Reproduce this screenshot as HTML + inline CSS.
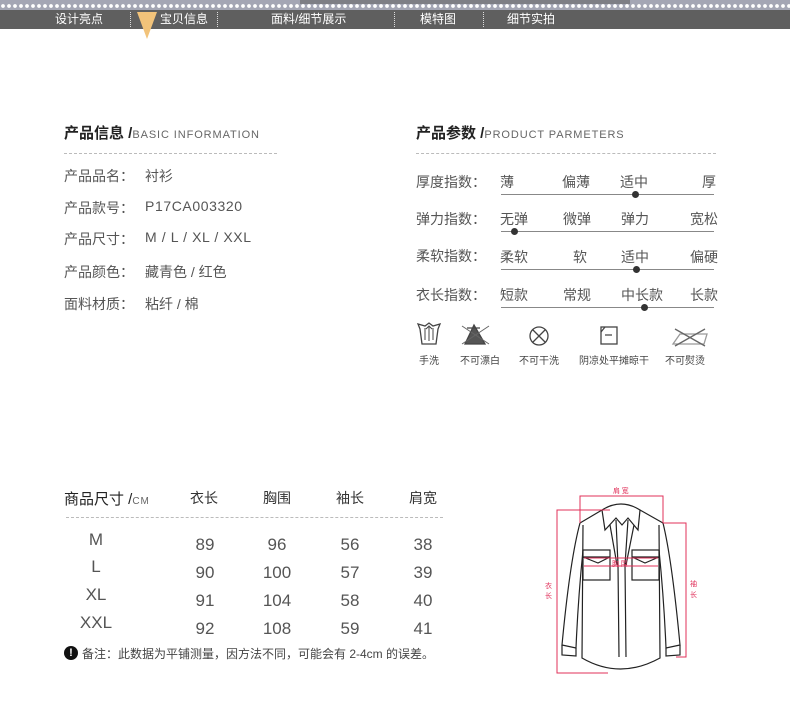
<!DOCTYPE html>
<html><head><meta charset="utf-8"><style>
*{margin:0;padding:0;box-sizing:border-box}
body{width:790px;height:709px;background:#fff;position:relative;overflow:hidden;font-family:"Liberation Sans","Noto Sans CJK SC",sans-serif;color:#555}
.a{position:absolute;white-space:nowrap}
.top{left:0;top:0;width:790px;height:10px;background:#a4a6b4}
.scal{left:0;top:3px;width:790px;height:6px;background:radial-gradient(circle at 3px 3px,#fff 1.6px,transparent 2.2px) 0 0/6px 6px repeat-x}
.nav{left:0;top:10px;width:790px;height:19px;background:#5f5f5f}
.nav span{position:absolute;top:2px;color:#fff;font-size:12px;line-height:15px}
.sep{position:absolute;top:2px;height:15px;border-left:1px dotted #ddd}
.t{font-size:15px;font-weight:bold;color:#222}
.t small{font-size:11px;font-weight:normal;color:#666;letter-spacing:.9px}
.dl{border-top:1px dashed #bbb;height:0}
.r{font-size:14px;color:#555}
.ln{height:1px;background:#888}
.dot{width:7px;height:7px;border-radius:50%;background:#333}
.ic{font-size:10px;color:#444}
.n{font-size:17px;color:#555;width:60px;text-align:center;margin-left:-30px}
</style></head><body>
<div class="a top"></div><div class="a scal"></div>
<div class="a" style="left:300px;top:0;width:330px;height:4px;background:#666;opacity:.6"></div>
<div class="a nav">
<span style="left:55px">设计亮点</span><i class="sep" style="left:130px"></i>
<span style="left:160px">宝贝信息</span><i class="sep" style="left:217px"></i>
<span style="left:271px">面料/细节展示</span><i class="sep" style="left:394px"></i>
<span style="left:420px">模特图</span><i class="sep" style="left:483px"></i>
<span style="left:507px">细节实拍</span>
</div>
<svg class="a" style="left:136px;top:12px" width="24" height="28"><polygon points="1,0 21,0 11,27" fill="#f2c37a"/></svg>

<div class="a t" style="left:64px;top:122px">产品信息 /<small>BASIC INFORMATION</small></div>
<div class="a dl" style="left:64px;top:153px;width:213px"></div>
<div class="a r" style="left:64px;top:166px">产品品名：</div><div class="a r" style="left:145px;top:166px">衬衫</div>
<div class="a r" style="left:64px;top:198px">产品款号：</div><div class="a r" style="left:145px;top:198px;letter-spacing:.6px">P17CA003320</div>
<div class="a r" style="left:64px;top:229px">产品尺寸：</div><div class="a r" style="left:145px;top:229px;letter-spacing:.6px">M / L / XL / XXL</div>
<div class="a r" style="left:64px;top:262px">产品颜色：</div><div class="a r" style="left:145px;top:262px">藏青色 / 红色</div>
<div class="a r" style="left:64px;top:294px">面料材质：</div><div class="a r" style="left:145px;top:294px">粘纤 / 棉</div>

<div class="a t" style="left:416px;top:122px">产品参数 /<small>PRODUCT PARMETERS</small></div>
<div class="a dl" style="left:416px;top:153px;width:300px"></div>

<div class="a r" style="left:416px;top:172px">厚度指数：</div>
<div class="a r" style="left:500px;top:172px">薄</div><div class="a r" style="left:562px;top:172px">偏薄</div><div class="a r" style="left:620px;top:172px">适中</div><div class="a r" style="left:702px;top:172px">厚</div>
<div class="a ln" style="left:501px;top:194px;width:213px"></div><div class="a dot" style="left:632px;top:191px"></div>

<div class="a r" style="left:416px;top:209px">弹力指数：</div>
<div class="a r" style="left:500px;top:209px">无弹</div><div class="a r" style="left:563px;top:209px">微弹</div><div class="a r" style="left:621px;top:209px">弹力</div><div class="a r" style="left:690px;top:209px">宽松</div>
<div class="a ln" style="left:501px;top:231px;width:213px"></div><div class="a dot" style="left:511px;top:228px"></div>

<div class="a r" style="left:416px;top:246px">柔软指数：</div>
<div class="a r" style="left:500px;top:247px">柔软</div><div class="a r" style="left:573px;top:247px">软</div><div class="a r" style="left:621px;top:247px">适中</div><div class="a r" style="left:690px;top:247px">偏硬</div>
<div class="a ln" style="left:501px;top:269px;width:213px"></div><div class="a dot" style="left:633px;top:266px"></div>

<div class="a r" style="left:416px;top:285px">衣长指数：</div>
<div class="a r" style="left:500px;top:285px">短款</div><div class="a r" style="left:563px;top:285px">常规</div><div class="a r" style="left:621px;top:285px">中长款</div><div class="a r" style="left:690px;top:285px">长款</div>
<div class="a ln" style="left:501px;top:307px;width:213px"></div><div class="a dot" style="left:641px;top:304px"></div>

<svg class="a" style="left:405px;top:318px" width="310" height="36" fill="none" stroke="#444" stroke-width="1.3">
<path d="M15 11 L13 6 L20 8 L24 5 L28 8 L35 6 L33 11 L31 26 L17 26 Z"/><path d="M20 10v12M24 9v14M28 10v12M21 11l3-3 3 3" stroke-width="1"/>
<path d="M62 10 L75 10 M69 7 L60 26 L80 26 Z" fill="#555"/><path d="M57 26 L84 8 M57 8 L84 26" stroke="#666" stroke-width="1"/>
<circle cx="134" cy="18" r="9"/><path d="M128 12l12 12M140 12l-12 12"/>
<rect x="196" y="9" width="16" height="17"/><path d="M196 14l4-5M200 17h7"/>
<path d="M268 26 L275 16 L302 16 L299 26 Z" stroke="#999"/><path d="M270 11 L300 28 M270 28 L300 11" stroke="#666"/>
</svg>
<div class="a ic" style="left:419px;top:352px">手洗</div>
<div class="a ic" style="left:460px;top:352px">不可漂白</div>
<div class="a ic" style="left:519px;top:352px">不可干洗</div>
<div class="a ic" style="left:579px;top:352px">阴凉处平摊晾干</div>
<div class="a ic" style="left:665px;top:352px">不可熨烫</div>

<div class="a t" style="left:64px;top:488px;font-weight:normal;color:#222;font-size:15px">商品尺寸 /<small style="font-size:10px">CM</small></div>
<div class="a" style="left:190px;top:488px;font-size:14px;color:#333">衣长</div>
<div class="a" style="left:263px;top:488px;font-size:14px;color:#333">胸围</div>
<div class="a" style="left:336px;top:488px;font-size:14px;color:#333">袖长</div>
<div class="a" style="left:409px;top:488px;font-size:14px;color:#333">肩宽</div>
<div class="a dl" style="left:66px;top:517px;width:377px"></div>

<div class="a n" style="left:96px;top:530px">M</div><div class="a n" style="left:96px;top:557px">L</div><div class="a n" style="left:96px;top:585px">XL</div><div class="a n" style="left:96px;top:613px">XXL</div>
<div class="a n" style="left:205px;top:535px">89</div><div class="a n" style="left:277px;top:535px">96</div><div class="a n" style="left:350px;top:535px">56</div><div class="a n" style="left:423px;top:535px">38</div>
<div class="a n" style="left:205px;top:563px">90</div><div class="a n" style="left:277px;top:563px">100</div><div class="a n" style="left:350px;top:563px">57</div><div class="a n" style="left:423px;top:563px">39</div>
<div class="a n" style="left:205px;top:591px">91</div><div class="a n" style="left:277px;top:591px">104</div><div class="a n" style="left:350px;top:591px">58</div><div class="a n" style="left:423px;top:591px">40</div>
<div class="a n" style="left:205px;top:619px">92</div><div class="a n" style="left:277px;top:619px">108</div><div class="a n" style="left:350px;top:619px">59</div><div class="a n" style="left:423px;top:619px">41</div>
<div class="a" style="left:64px;top:646px;width:14px;height:14px;border-radius:50%;background:#111;color:#fff;font-size:11px;font-weight:bold;text-align:center;line-height:14px">!</div>
<div class="a" style="left:82px;top:645px;font-size:12px;color:#444">备注：此数据为平铺测量，因方法不同，可能会有 2-4cm 的误差。</div>

<svg class="a" style="left:540px;top:470px" width="200" height="230" fill="none" stroke="#222" stroke-width="1.2">
<path d="M62 40 Q81 28 100 40 L98 60 L88 48 L82 55 L76 48 L65 60 Z"/>
<path d="M62 40 L40 53 M100 40 L123 53"/>
<path d="M40 53 Q30 90 22 175 L36 178 Q38 130 43 80 M123 53 Q132 90 140 175 L126 178 Q124 130 119 80"/>
<path d="M22 175 L22 185 L36 186 L36 178 M140 175 L140 185 L126 186 L126 178"/>
<path d="M43 55 L42 188 Q80 210 120 188 L119 55"/>
<path d="M76 50 L78 95 L79 187 M88 50 L85 95 L86 187 M70 55 L77 95 M94 55 L86 95"/>
<rect x="43" y="80" width="27" height="30"/><path d="M43 87 L70 87 M43 87 L58 93 L70 87"/>
<rect x="92" y="80" width="27" height="30"/><path d="M92 87 L119 87 M92 87 L105 93 L119 87"/>
<g stroke="#e0305a" stroke-width="1">
<path d="M40 53 V26 H123 V53"/><path d="M70 40 H17 V203 H68"/><path d="M123 53 H146 V187 H136"/>
<path d="M44 96 H118 M44 88 H118" /></g>
<g fill="#e0305a" stroke="none" font-size="7" font-family="Noto Sans CJK SC,sans-serif">
<text x="73" y="23">肩 宽</text><text x="72" y="96">胸 围</text>
<text x="5" y="118">衣</text><text x="5" y="128">长</text><text x="150" y="116">袖</text><text x="150" y="127">长</text></g>
</svg>
</body></html>
